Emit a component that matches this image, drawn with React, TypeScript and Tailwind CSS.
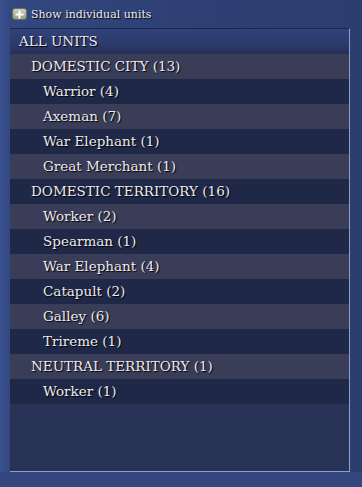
import React from "react";

type Row = { label: string; level: 1 | 2 };

const rows: Row[] = [
  { label: "DOMESTIC CITY (13)", level: 1 },
  { label: "Warrior (4)", level: 2 },
  { label: "Axeman (7)", level: 2 },
  { label: "War Elephant (1)", level: 2 },
  { label: "Great Merchant (1)", level: 2 },
  { label: "DOMESTIC TERRITORY (16)", level: 1 },
  { label: "Worker (2)", level: 2 },
  { label: "Spearman (1)", level: 2 },
  { label: "War Elephant (4)", level: 2 },
  { label: "Catapult (2)", level: 2 },
  { label: "Galley (6)", level: 2 },
  { label: "Trireme (1)", level: 2 },
  { label: "NEUTRAL TERRITORY (1)", level: 1 },
  { label: "Worker (1)", level: 2 },
];

const font = { fontFamily: '"DejaVu Serif", "Liberation Serif", serif' };

export default function App() {
  return (
    <div
      className="w-[362px] h-[487px] overflow-hidden flex flex-col bg-[linear-gradient(90deg,#3b5293_0px,#33487f_10px,#2e4074_50%,#2c3d6e_100%)] text-[#ebebf2] [text-shadow:1px_1px_1px_#000]"
      style={font}
    >
      <div className="h-[28px] flex items-center pl-[12px] gap-[4px] shrink-0">
        <div className="w-[15px] h-[12px] rounded-[3px] bg-[linear-gradient(180deg,#cdd0be,#959b84)] border border-[#6a705c] flex items-center justify-center">
          <svg width="9" height="9" viewBox="0 0 9 9">
            <rect x="3.5" y="0.5" width="2" height="8" fill="#fff" />
            <rect x="0.5" y="3.5" width="8" height="2" fill="#fff" />
          </svg>
        </div>
        <span className="text-[11px] leading-none">Show individual units</span>
      </div>
      <div className="ml-[10px] w-[340px] h-[444px] shrink-0 border-t border-t-[#1c2645] border-r border-r-[#8d9fcc] border-b border-b-[#8d9fcc] bg-[#283257] flex flex-col">
        <div className="h-[25px] shrink-0 flex items-center pl-[9px] bg-[linear-gradient(180deg,#31427b_0%,#2c3a6c_60%,#272f56_100%)] text-[13.5px]">
          ALL UNITS
        </div>
        {rows.map((r, i) => (
          <div
            key={i}
            className={`h-[25px] shrink-0 flex items-center text-[13.5px] ${i % 2 === 0 ? "bg-[#393d58]" : "bg-[#1f2846]"} ${r.level === 1 ? "pl-[21px]" : "pl-[33px]"}`}
          >
            {r.label}
          </div>
        ))}
      </div>
      <div className="flex-1 bg-[#33477e]" />
    </div>
  );
}
